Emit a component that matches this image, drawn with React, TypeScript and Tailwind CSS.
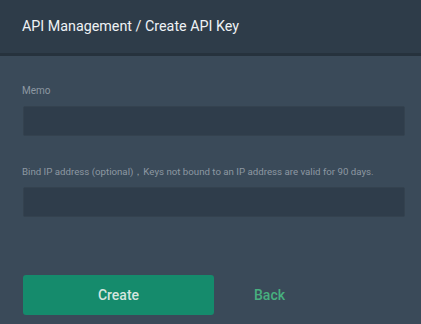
export default function App() {
  return (
    <div className="w-[421px] h-[324px] overflow-hidden bg-[#3a4a59] font-['Roboto','Liberation_Sans',sans-serif]">
      {/* Header */}
      <div className="h-[56px] bg-[#2e3c49] border-b-[3px] border-[#26323d] flex items-center px-[22px]">
        <h1 className="text-[14.3px] text-[#eef2f5]">API Management / Create API Key</h1>
      </div>

      {/* Form */}
      <div className="px-[23px] pt-[29px]">
        <label className="block text-[10px] leading-[12px] text-[#8d98a2] -ml-px">Memo</label>
        <input className="mt-[9px] block w-[382px] h-[30px] rounded-[2px] bg-[#2f3d4b] border border-[#34424f] outline-none" />

        <label className="block mt-[30px] text-[9.7px] leading-[12px] text-[#8d98a2] -ml-px">
          Bind IP address (optional)，Keys not bound to an IP address are valid for 90 days.
        </label>
        <input className="mt-[9px] block w-[382px] h-[30px] rounded-[2px] bg-[#2f3d4b] border border-[#34424f] outline-none" />

        <div className="mt-[58px] flex items-center">
          <button className="w-[191px] h-[40px] rounded-[3px] bg-[#158b6c] text-[14px] font-medium text-[#d4e5df]">
            Create
          </button>
          <button className="ml-[40px] text-[14px] font-medium text-[#47b07f]">Back</button>
        </div>
      </div>
    </div>
  );
}
